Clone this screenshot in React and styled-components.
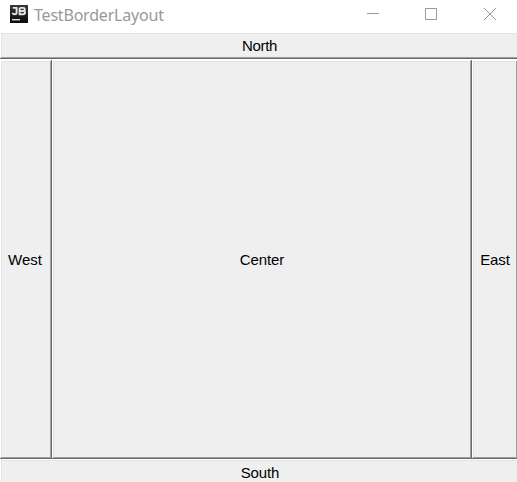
import React from "react";
import styled, { createGlobalStyle } from "styled-components";

const GlobalStyle = createGlobalStyle`
  body { margin: 0; background: #fff; overflow: hidden; }
`;

const Window = styled.div`
  width: 517px;
  height: 482px;
  overflow: hidden;
  display: flex;
  flex-direction: column;
  background: #fff;
`;

const TitleBar = styled.header`
  flex: none;
  height: 32px;
  display: flex;
  align-items: flex-start;
`;

const AppIcon = styled.svg`
  flex: none;
  margin: 5px 6px 0 10px;
`;

const Title = styled.h1`
  margin: 4px auto 0 0;
  font: 400 16px/22px "Noto Sans", sans-serif;
  letter-spacing: -0.2px;
  color: #999;
  white-space: nowrap;
`;

const WindowControls = styled.div`
  display: flex;
  padding: 8px 21px 0 0;
`;

const Control = styled.button`
  width: 12px;
  height: 12px;
  margin-left: ${(p) => p.$gap || 0}px;
  padding: 0;
  border: 0;
  background: none;
  color: #999;

  svg { display: block; }
`;

const BorderLayout = styled.main`
  flex: none;
  width: 518px;
  display: grid;
  grid-template-columns: 52px 420px 46px;
  grid-template-rows: 28px 399px 27px;
  grid-template-areas:
    "north north north"
    "west center east"
    "south south south";
`;

const Region = styled.button`
  grid-area: ${(p) => p.$area};
  margin: ${(p) => p.$margin || 0};
  padding: ${(p) => p.$padding || 0};
  border: 0;
  background: #efefef;
  box-shadow:
    inset -1px -1px #696969,
    inset 1px 1px #fff,
    inset -2px -2px #a0a0a0,
    inset 2px 2px #e3e3e3;
  font: 400 15px/18px "Liberation Sans", Arial, sans-serif;
  letter-spacing: ${(p) => p.$tracking || "-0.1px"};
  color: #000;
`;

export default function App() {
  return (
    <>
      <GlobalStyle />
      <Window>
        <TitleBar>
          <AppIcon width="18" height="18" viewBox="0 0 18 18">
            <defs>
              <linearGradient id="tile" x2="0" y2="1">
                <stop offset="0" stopColor="#34393a" />
                <stop offset="1" stopColor="#080a0b" />
              </linearGradient>
            </defs>
            <path d="M0 0H18V18H0Z" fill="url(#tile)" />
            <path
              d="M2.8 2.9H6.6V7.4Q6.6 9.2 4.8 9.2Q3.2 9.2 2.2 8.2M9.6 2.9V9.2H13.2Q15.1 9.2 15.1 7.6Q15.1 6 13.2 6H9.6M13 6Q14.8 6 14.8 4.4Q14.8 2.9 13 2.9H9.6"
              fill="none"
              stroke="#e4e4e4"
              strokeWidth="1.9"
            />
            <path d="M2 14H10V15.4H2Z" fill="#ddd" />
          </AppIcon>
          <Title>TestBorderLayout</Title>
          <WindowControls>
            <Control aria-label="Minimize">
              <svg width="12" height="12"><path d="M0 5.5H12" stroke="currentColor" /></svg>
            </Control>
            <Control aria-label="Maximize" $gap={46}>
              <svg width="12" height="12">
                <path d="M.5 .5H11.5V11.5H.5Z" fill="none" stroke="currentColor" />
              </svg>
            </Control>
            <Control aria-label="Close" $gap={47}>
              <svg width="12" height="12"><path d="M0 0L12 12M12 0L0 12" stroke="currentColor" /></svg>
            </Control>
          </WindowControls>
        </TitleBar>
        <BorderLayout>
          <Region $area="north" $margin="0 -2px 1px 0" $padding="0 1px 0 0" $tracking="-0.3px">North</Region>
          <Region $area="west" $padding="0 2px 0 0" $tracking="0">West</Region>
          <Region $area="center">Center</Region>
          <Region $area="east">East</Region>
          <Region $area="south" $margin="0 -2px 0 0">South</Region>
        </BorderLayout>
      </Window>
    </>
  );
}
